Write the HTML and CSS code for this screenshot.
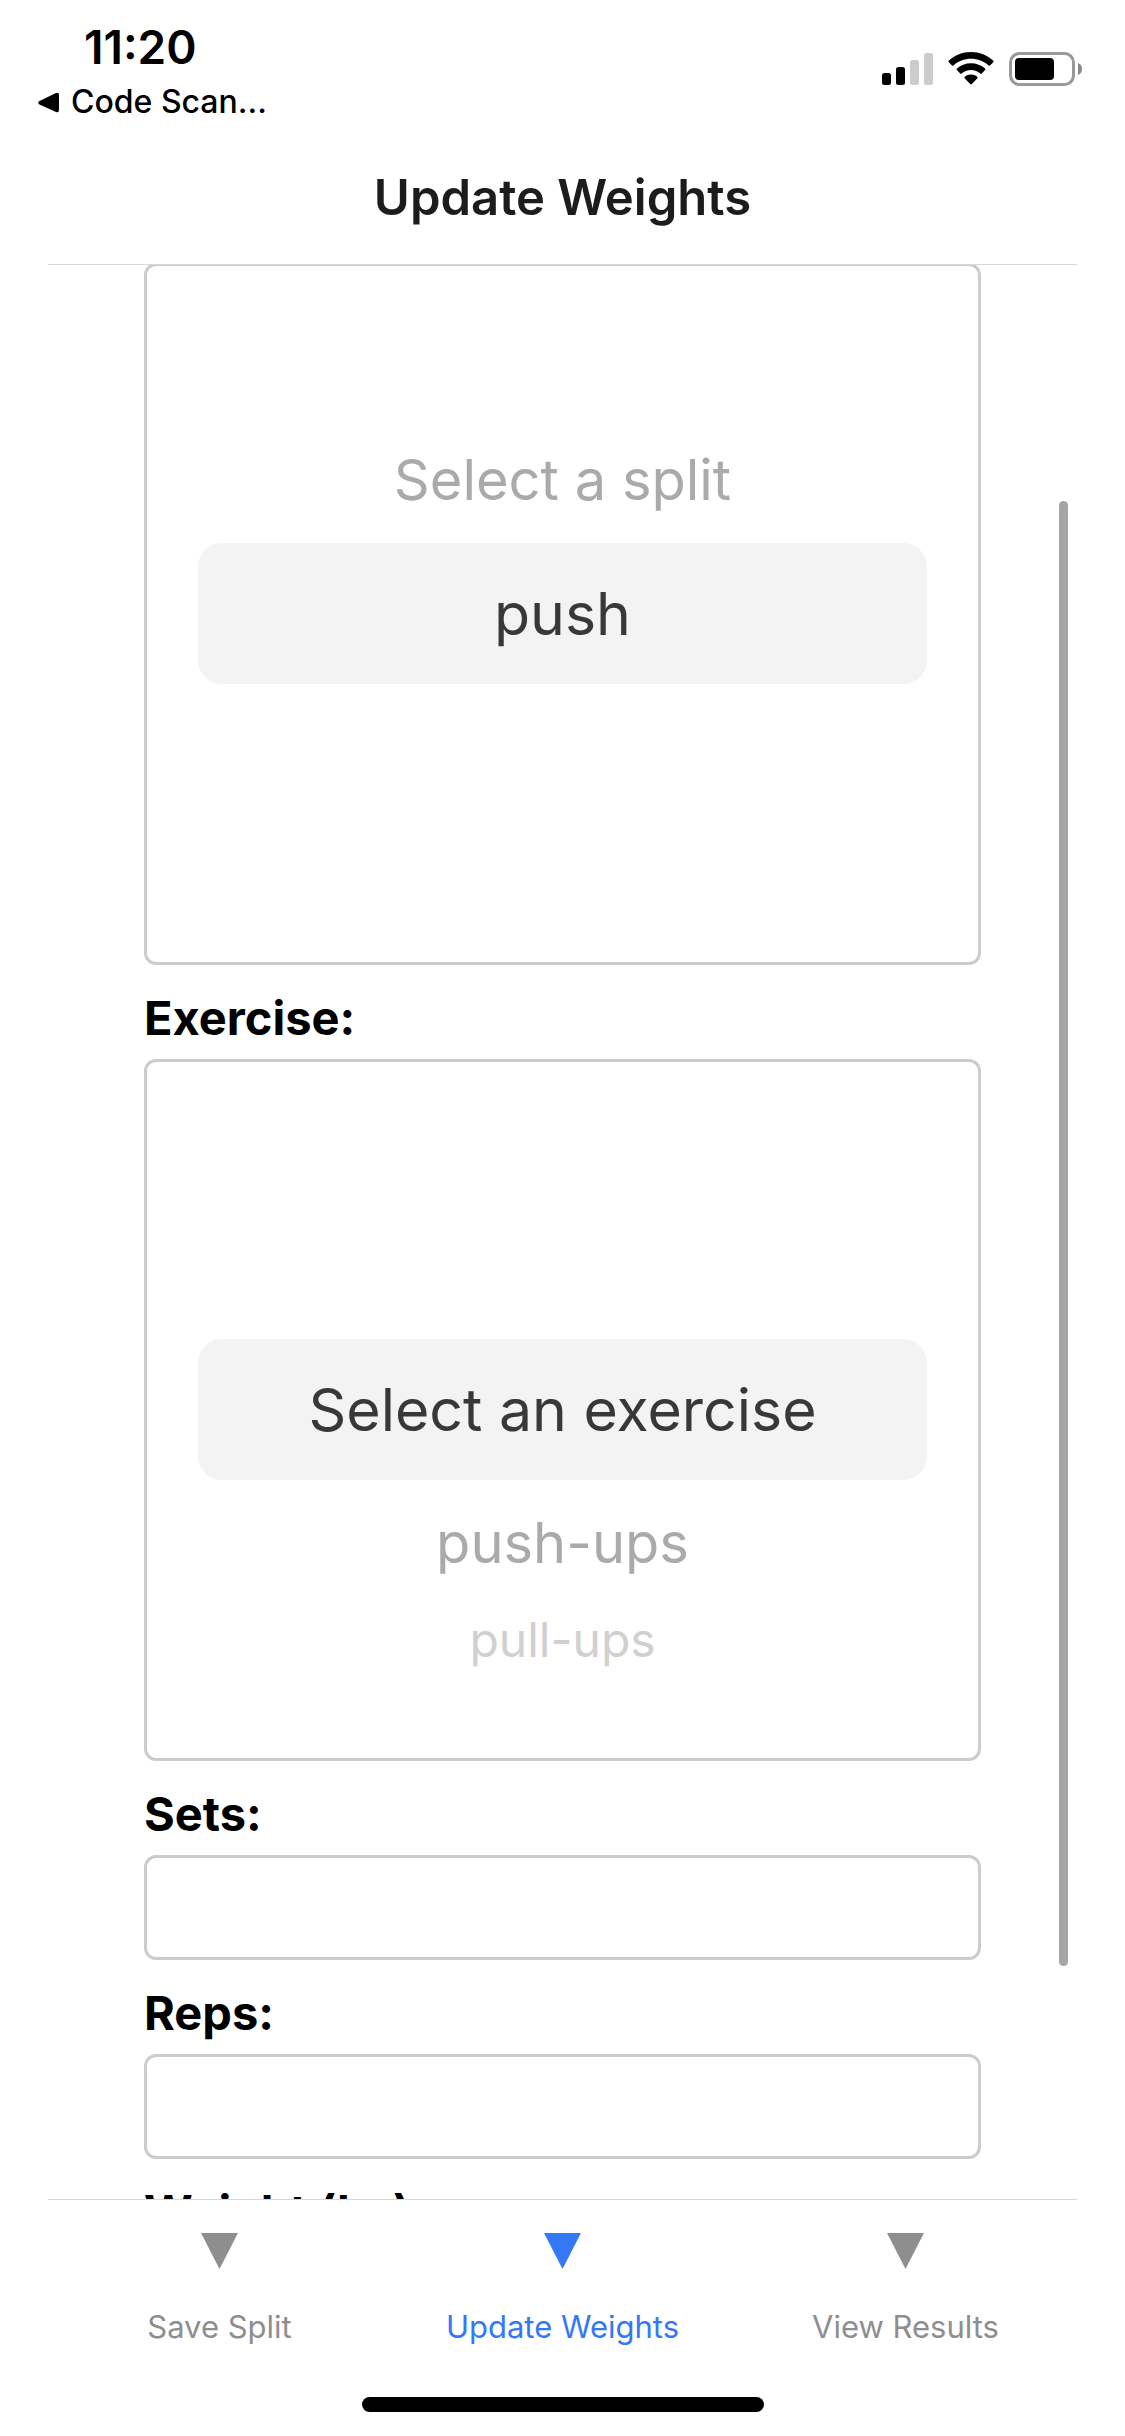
FILE: index.html
```html
<!DOCTYPE html>
<html lang="en">
<head>
<meta charset="utf-8">
<meta name="viewport" content="width=device-width, initial-scale=1">
<title>Update Weights</title>
<link rel="stylesheet" href="styles.css">
</head>
<body>
<header class="header">
  <div class="status">
    <div class="status-left">
      <time class="clock">11:20</time>
      <a class="back" href="#back">
        <svg width="21" height="21" viewBox="0 0 21 21" aria-hidden="true"><path d="M1.5 9 18 1q3-1 3 2v15q0 3-3 2L1.500 12.500Q-1 10.700 1.500 9z"/></svg>
        <span>Code Scan...</span>
      </a>
    </div>
    <div class="status-icons">
      <svg width="51" height="34" viewBox="0 0 51 34" role="img" aria-label="Signal">
        <rect x="0" y="21" width="9" height="12" rx="2.500"/>
        <rect x="14" y="15" width="9" height="18" rx="2.500"/>
        <rect x="28" y="8" width="9" height="25" rx="2.500" fill="#ccc"/>
        <rect x="42" y="1" width="9" height="32" rx="2.500" fill="#ccc"/>
      </svg>
      <svg width="46" height="34" viewBox="0 0 46 34" role="img" aria-label="Wi-Fi">
        <path d="M23 0C14.500 0 6.700 3.200 .8 8.600q-.8.800 0 1.600l3.200 3.200q.7.700 1.500 0C10.200 9.200 16.300 6.800 23 6.800s12.800 2.400 17.500 6.600q.8.700 1.500 0l3.200-3.200q.8-.8 0-1.600C39.300 3.200 31.500 0 23 0z"/>
        <path d="M23 11.200c-5.400 0-10.300 2-14.100 5.300q-.8.800 0 1.600l3.300 3.300q.7.700 1.500 0C16.200 19.300 19.400 18 23 18s6.800 1.300 9.300 3.400q.8.700 1.500 0l3.300-3.300q.8-.8 0-1.600C33.300 13.200 28.400 11.200 23 11.200z"/>
        <path d="M23 22.600c-2.400 0-4.500.8-6.200 2.200q-.8.800 0 1.600l5.400 5.500q.8.800 1.600 0l5.400-5.500q.8-.8 0-1.600c-1.700-1.400-3.800-2.200-6.200-2.200z"/>
      </svg>
      <svg width="73" height="34" viewBox="0 0 73 34" role="img" aria-label="Battery">
        <rect x="1.500" y="1.500" width="63" height="31" rx="9" fill="none" stroke="#999" stroke-width="3"/>
        <rect x="6" y="6" width="39" height="22" rx="4"/>
        <path d="M69 11q4 1.500 4 6t-4 6z" fill="#888"/>
      </svg>
    </div>
  </div>
  <h1 class="title">Update Weights</h1>
</header>

<main class="scroller">
  <form class="form">
    <select class="wheel wheel-second" size="5" aria-label="Split">
      <option class="near">Select a split</option>
      <option class="current" selected>push</option>
    </select>

    <label class="label" for="exercise">Exercise:</label>
    <select class="wheel" id="exercise" size="5">
      <option class="current" selected>Select an exercise</option>
      <option class="near">push-ups</option>
      <option class="far">pull-ups</option>
    </select>

    <label class="label" for="sets">Sets:</label>
    <input class="field" id="sets" type="text" inputmode="numeric">

    <label class="label" for="reps">Reps:</label>
    <input class="field" id="reps" type="text" inputmode="numeric">

    <label class="label" for="weight">Weight (kg):</label>
    <input class="field" id="weight" type="text" inputmode="decimal">
  </form>
  <div class="scrollbar"></div>
</main>

<footer class="footer">
  <nav class="tabs">
    <a class="tab" href="#save">
      <svg width="37" height="36" viewBox="0 0 37 36" aria-hidden="true"><path d="M0 0h37L18.500 36z"/></svg>
      <span>Save Split</span>
    </a>
    <a class="tab active" href="#update" aria-current="page">
      <svg width="37" height="36" viewBox="0 0 37 36" aria-hidden="true"><path d="M0 0h37L18.500 36z"/></svg>
      <span>Update Weights</span>
    </a>
    <a class="tab" href="#results">
      <svg width="37" height="36" viewBox="0 0 37 36" aria-hidden="true"><path d="M0 0h37L18.500 36z"/></svg>
      <span>View Results</span>
    </a>
  </nav>
  <div class="home-indicator"></div>
</footer>
</body>
</html>
```
FILE: styles.css
```css
* {
  box-sizing: border-box;
}

body {
  margin: 0;
  height: 100vh;
  display: flex;
  flex-direction: column;
  background: #fff;
  color: #000;
  font-family: Inter, "Liberation Sans", sans-serif;
}

svg {
  display: block;
  fill: currentColor;
}

/* Header */
.header {
  flex: none;
  margin: 0 48px;
  border-bottom: 1px solid #d8d8d8;
}

.status {
  height: 132px;
  margin: 0 -48px;
  padding: 17px 43px 0 38px;
  display: flex;
  justify-content: space-between;
  align-items: flex-start;
}

.clock {
  display: block;
  padding-left: 46px;
  font-size: 46px;
  line-height: 60px;
  font-weight: 600;
}

.back {
  display: flex;
  align-items: center;
  gap: 12px;
  color: #000;
  font-size: 32px;
  line-height: 50px;
  font-weight: 500;
  text-decoration: none;
}

.status-icons {
  display: flex;
  gap: 15px;
  padding-top: 35px;
}

.title {
  margin: 0;
  color: #1c1c1e;
  font-size: 49px;
  line-height: 132px;
  font-weight: 600;
  text-align: center;
}

/* Scrolling form */
.scroller {
  flex: 1;
  min-height: 0;
  position: relative;
  overflow: hidden;
}

.form {
  display: flex;
  flex-direction: column;
  margin-top: -2px;
  padding: 0 144px;
}

.label {
  padding-top: 12px;
  font-size: 47px;
  line-height: 82px;
  font-weight: 700;
}

.field,
.wheel {
  width: 100%;
  margin: 0;
  border: 3px solid #ccc;
  border-radius: 12px;
  background: #fff;
  outline: none;
  font-family: inherit;
}

.field {
  height: 105px;
  padding: 0 24px;
  font-size: 47px;
}

.wheel {
  flex: none;
  height: 702px;
  padding: 277px 51px 0;
  overflow: hidden;
  appearance: none;
}

.wheel-second {
  padding-top: 151px;
}

/* Option line boxes ignore line-height, so the row heights come from padding */
.wheel option {
  min-height: 0;
  text-align: center;
}

.wheel .current {
  padding: 35px 0;
  border-radius: 24px;
  background: #f3f3f3 linear-gradient(#f3f3f3, #f3f3f3);
  color: #38383a;
  -webkit-text-fill-color: #38383a;
  font-size: 59px;
}

.wheel .near {
  padding: 29px 0;
  color: #aaa;
  font-size: 56px;
}

.wheel .far {
  padding: 4px 0;
  color: #d0d0d0;
  font-size: 48px;
}

.scrollbar {
  position: absolute;
  top: 236px;
  right: 57px;
  width: 9px;
  bottom: 233px;
  border-radius: 5px;
  background: #a5a5a5;
}

/* Tab bar */
.footer {
  flex: none;
  margin: 0 48px;
  border-top: 1px solid #d8d8d8;
}

.tabs {
  display: flex;
  padding-top: 33px;
}

.tab {
  flex: 1;
  display: flex;
  flex-direction: column;
  align-items: center;
  gap: 38px;
  color: #8e8e8f;
  font-size: 31px;
  line-height: 40px;
  text-decoration: none;
}

.active {
  color: #3478f6;
}

.home-indicator {
  width: 402px;
  height: 15px;
  margin: 50px auto 24px;
  border-radius: 8px;
  background: #000;
}
```
